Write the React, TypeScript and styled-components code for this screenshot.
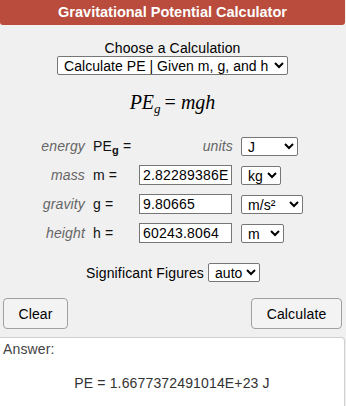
import { useState } from "react";
import styled, { createGlobalStyle } from "styled-components";

const GlobalStyle = createGlobalStyle`
	html, body {
		margin: 0;
		padding: 0;
		background: #f0f0f0;
	}
	body {
		font-family: "Liberation Sans", Arial, sans-serif;
		font-size: 14px;
		letter-spacing: 0.15px;
		color: #000;
	}
`;

const Card = styled.div`
	width: 345px;
	height: 406px;
	display: flex;
	flex-direction: column;
	background: #f0f0f0;
	overflow: hidden;
`;

const Header = styled.div`
	height: 25px;
	line-height: 25px;
	background: #b94c3c;
	color: #fff;
	font-weight: bold;
	font-size: 14.5px;
	letter-spacing: 0;
	text-align: center;
	border-radius: 0 0 3px 3px;
`;

const Chooser = styled.div`
	margin-top: 15px;
	display: flex;
	flex-direction: column;
	align-items: center;
	line-height: 16px;
`;

const Select = styled.select<{ $w: number }>`
	width: ${(p) => p.$w}px;
	height: 19px;
	box-sizing: border-box;
	font-family: "Liberation Sans", Arial, sans-serif;
	font-size: 14px;
	letter-spacing: 0.05px;
	color: #000;
	background: #fff;
	border: 1px solid #767676;
	border-radius: 2px;
	padding: 0 0 0 2px;
	margin: 0;
`;

const Formula = styled.div`
	margin-top: 15px;
	line-height: 24px;
	text-align: center;
	font-family: "Liberation Serif", "Times New Roman", serif;
	font-size: 20px;
	letter-spacing: 0;

	& i {
		font-style: italic;
	}
	& sub {
		font-style: italic;
		font-size: 13px;
		vertical-align: -4px;
		line-height: 0;
	}
	& .eq {
		margin: 0 5px 0 4px;
	}
`;

const Fields = styled.div`
	margin-top: 22px;
	display: grid;
	grid-template-columns: 85px 38px 94px auto;
	grid-auto-rows: 20px;
	column-gap: 8px;
	row-gap: 9px;
	align-items: center;
`;

const Label = styled.span`
	text-align: right;
	font-style: italic;
	color: #666;
`;

const Variable = styled.span`
	color: #111;
	white-space: nowrap;

	& sub {
		font-size: 11px;
		font-weight: bold;
		vertical-align: -3px;
		line-height: 0;
	}
`;

const Input = styled.input`
	width: 93px;
	height: 20px;
	box-sizing: border-box;
	font-family: "Liberation Sans", Arial, sans-serif;
	font-size: 14px;
	letter-spacing: 0.2px;
	color: #000;
	background: #fff;
	border: 1px solid #767676;
	padding: 0 3px;
	margin: 0;
`;

const SigRow = styled.div`
	margin-top: 20px;
	display: flex;
	align-items: center;
	justify-content: center;
	gap: 4px;
	padding-left: 1px;
`;

const Buttons = styled.div`
	margin-top: 16px;
	display: flex;
	justify-content: space-between;
	padding: 0 3px;
`;

const Button = styled.button<{ $w: number }>`
	width: ${(p) => p.$w}px;
	height: 31px;
	box-sizing: border-box;
	font-family: "Liberation Sans", Arial, sans-serif;
	font-size: 14px;
	letter-spacing: 0.15px;
	color: #000;
	background: #f3f3f3;
	border: 1px solid #a0a0a0;
	border-radius: 4px;
	padding: 0;
	margin: 0;
`;

const Answer = styled.div`
	margin-top: 8px;
	flex: 1;
	background: #fff;
	border-top: 1px solid #d0d0d0;
	border-right: 1px solid #d0d0d0;
	border-top-right-radius: 4px;
	padding: 3px 3px 0;
	color: #444;
	line-height: 16px;
`;

const Result = styled.div`
	margin-top: 18px;
	text-align: center;
	color: #333;
`;

export default function App() {
	const [mass, setMass] = useState("2.82289386E+19");
	const [gravity, setGravity] = useState("9.80665");
	const [height, setHeight] = useState("60243.8064");

	return (
		<Card>
			<GlobalStyle />
			<Header>Gravitational Potential Calculator</Header>
			<Chooser>
				<span>Choose a Calculation</span>
				<Select $w={231} defaultValue="pe">
					<option value="pe">Calculate PE | Given m, g, and h</option>
					<option value="m">Calculate m | Given PE, g, and h</option>
					<option value="g">Calculate g | Given PE, m, and h</option>
					<option value="h">Calculate h | Given PE, m, and g</option>
				</Select>
			</Chooser>
			<Formula>
				<i>PE</i><sub>g</sub><span className="eq">=</span><i>mgh</i>
			</Formula>
			<Fields>
				<Label>energy</Label>
				<Variable>PE<sub>g</sub> =</Variable>
				<Label>units</Label>
				<Select $w={57} defaultValue="J">
					<option>J</option>
					<option>kJ</option>
					<option>MJ</option>
				</Select>

				<Label>mass</Label>
				<Variable>m =</Variable>
				<Input value={mass} onChange={(e) => setMass(e.target.value)} />
				<Select $w={40} defaultValue="kg">
					<option>kg</option>
					<option>g</option>
					<option>lb</option>
				</Select>

				<Label>gravity</Label>
				<Variable>g =</Variable>
				<Input value={gravity} onChange={(e) => setGravity(e.target.value)} />
				<Select $w={62} defaultValue="m/s²">
					<option>m/s²</option>
					<option>ft/s²</option>
				</Select>

				<Label>height</Label>
				<Variable>h =</Variable>
				<Input value={height} onChange={(e) => setHeight(e.target.value)} />
				<Select $w={43} defaultValue="m">
					<option>m</option>
					<option>km</option>
					<option>ft</option>
				</Select>
			</Fields>
			<SigRow>
				<span>Significant Figures</span>
				<Select $w={52} defaultValue="auto">
					<option>auto</option>
					<option>3</option>
					<option>4</option>
					<option>5</option>
				</Select>
			</SigRow>
			<Buttons>
				<Button $w={65}>Clear</Button>
				<Button $w={91}>Calculate</Button>
			</Buttons>
			<Answer>
				Answer:
				<Result>PE = 1.6677372491014E+23 J</Result>
			</Answer>
		</Card>
	);
}
